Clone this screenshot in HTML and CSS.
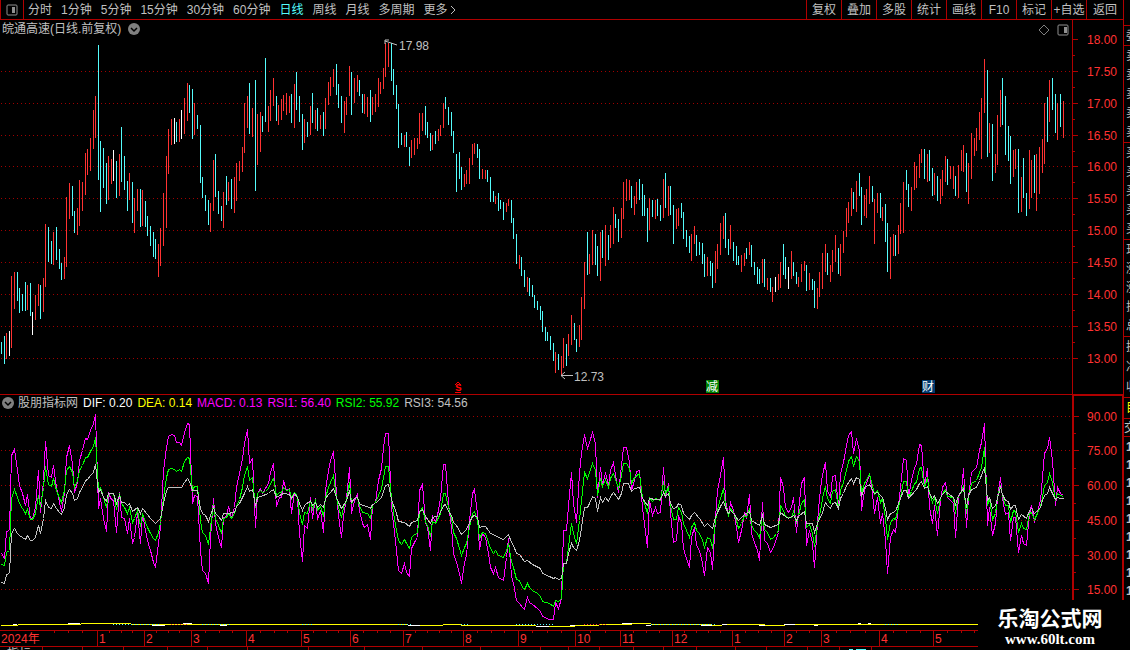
FILE: index.html
```html
<!DOCTYPE html>
<html lang="zh-CN">
<head>
  <meta charset="utf-8">
  <title>皖通高速 日线</title>
  <link rel="stylesheet" href="styles.css">
</head>
<body>
  <div class="app">
    <header class="toolbar">
      <button class="layout-btn" aria-label="布局">
        <svg width="12" height="12" viewBox="0 0 12 12"><rect x="1" y="1" width="10" height="10" rx="1" fill="none" stroke="#909090"/><rect x="6" y="3" width="3" height="6" fill="#909090"/></svg>
      </button>
      <nav class="periods">
        <button>分时</button>
        <button>1分钟</button>
        <button>5分钟</button>
        <button>15分钟</button>
        <button>30分钟</button>
        <button>60分钟</button>
        <button class="active">日线</button>
        <button>周线</button>
        <button>月线</button>
        <button>多周期</button>
        <button>更多<svg width="10" height="10" viewBox="0 0 10 10"><path d="M3 1 L7 5 L3 9" fill="none" stroke="#c0c0c0"/></svg></button>
      </nav>
      <div class="tools">
        <button>复权</button>
        <button>叠加</button>
        <button>多股</button>
        <button>统计</button>
        <button>画线</button>
        <button>F10</button>
        <button>标记</button>
        <button>+自选</button>
        <button>返回</button>
      </div>
    </header>

    <main class="main">
      <div class="charts">
        <section class="pane price-pane">
          <svg id="price-chart" class="chart"></svg>
          <div class="pane-title">
            <span>皖通高速(日线.前复权)</span>
            <svg width="12" height="12" viewBox="0 0 12 12"><circle cx="6" cy="6" r="6" fill="#808080"/><path d="M3 5 L6 8 L9 5" fill="none" stroke="#000" stroke-width="1.5"/></svg>
          </div>
          <div class="pane-icons">
            <svg width="12" height="12" viewBox="0 0 12 12"><path d="M6 1 L11 6 L6 11 L1 6 Z" fill="none" stroke="#808080"/></svg>
            <svg width="12" height="12" viewBox="0 0 12 12"><rect x="1" y="1" width="10" height="10" rx="1" fill="none" stroke="#909090"/><rect x="7" y="3" width="3" height="6" fill="#909090"/></svg>
          </div>
        </section>
        <svg id="price-axis" class="axis"></svg>

        <section class="pane">
          <svg id="rsi-chart" class="chart"></svg>
          <div class="legend">
            <svg width="12" height="12" viewBox="0 0 12 12"><circle cx="6" cy="6" r="6" fill="#808080"/><path d="M3 5 L6 8 L9 5" fill="none" stroke="#000" stroke-width="1.5"/></svg>
            <span>股朋指标网</span>
            <span class="dif">DIF: 0.20</span>
            <span class="dea">DEA: 0.14</span>
            <span class="rsi1">MACD: 0.13</span>
            <span class="rsi1">RSI1: 56.40</span>
            <span class="rsi2">RSI2: 55.92</span>
            <span class="rsi3">RSI3: 54.56</span>
          </div>
        </section>
        <svg id="rsi-axis" class="axis axis-active"></svg>
      </div>

      <aside class="quote">
        <div class="group ratio"><span>委</span></div>
        <div class="group"><span>卖</span><span>卖</span><span>卖</span><span>卖</span><span>卖</span></div>
        <div class="group"><span>买</span><span>买</span><span>买</span><span>买</span><span>买</span></div>
        <div class="group"><span>现</span><span>涨</span><span>涨</span><span>振</span><span>总</span></div>
        <div class="group last"><span>换</span><span>净</span><span>收</span></div>
        <div class="group tab"><span>目</span></div>
        <div class="group deals"><span>交</span></div>
        <div class="times"><b>1</b><b>1</b><b>1</b><b>1</b><b>1</b><b>1</b><b>1</b><b>1</b><b>1</b></div>
      </aside>
    </main>

    <svg id="time-axis" class="time-axis"></svg>
    <footer class="bottom-tabs">
      <span>指标</span>
      <svg id="tab-lines"></svg>
    </footer>

    <div class="watermark">
      <strong>乐淘公式网</strong>
      <a href="#">www.60lt.com</a>
    </div>
  </div>
  <script src="chart.js"></script>
</body>
</html>
```

FILE: styles.css
```css
* {
  box-sizing: border-box;
}

body {
  margin: 0;
  background: #000;
  color: #c0c0c0;
  font: 12px/14px "Liberation Sans", "Noto Sans CJK SC", sans-serif;
}

button {
  padding: 0;
  border: 0;
  background: none;
  color: inherit;
  font: inherit;
  white-space: nowrap;
  cursor: pointer;
}

svg {
  display: block;
}

.app {
  position: relative;
  display: flex;
  flex-direction: column;
  min-height: 100vh;
  overflow: hidden;
}

/* toolbar */
.toolbar {
  display: flex;
  height: 20px;
  margin-right: 6px;
  border: 1px solid #b00000;
  border-top: 0;
}

.layout-btn {
  display: flex;
  align-items: center;
  justify-content: center;
  width: 23px;
  border-right: 1px solid #b00000;
}

.periods {
  display: flex;
  flex: 1;
  gap: 9px;
  padding-left: 4px;
}

.periods button {
  display: flex;
  align-items: center;
}

.periods .active {
  color: #54fcfc;
}

.tools {
  display: flex;
}

.tools button {
  width: 35px;
  border-left: 1px solid #b00000;
}

.tools button:last-child {
  width: 37px;
}

/* charts */
.main {
  flex: 1;
  display: grid;
  grid-template-columns: 1fr 7px;
}

.charts {
  display: grid;
  grid-template-columns: 1fr 51px;
  grid-template-rows: 375fr 235fr;
}

.pane {
  position: relative;
  min-width: 0;
}

.price-pane {
  border-bottom: 1px solid #b00000;
}

.chart,
.axis {
  width: 100%;
  height: 100%;
}

.chart {
  position: absolute;
  inset: 0;
}

.axis {
  min-height: 0;
  border-left: 1px solid #b00000;
}

.axis-active {
  position: relative;
  z-index: 1;
  width: calc(100% + 1px);
  height: calc(100% + 1px);
  margin-top: -1px;
  border: 2px solid #b00000;
  border-bottom: 0;
}

svg text {
  font-size: 12px;
}

.pane-title {
  position: absolute;
  top: 2px;
  left: 2px;
  display: flex;
  align-items: center;
  gap: 7px;
}

.pane-icons {
  position: absolute;
  top: 4px;
  right: 3px;
  display: flex;
  gap: 7px;
}

.legend {
  position: absolute;
  top: 1px;
  left: 2px;
  display: flex;
  align-items: center;
  gap: 5px;
}

.legend svg {
  margin-right: -1px;
}

.dif { color: #fff; }
.dea { color: #ff0; }
.rsi1 { color: #f0f; }
.rsi2 { color: #0f0; }
.rsi3 { color: #c0c0c0; }

/* quote panel, only its left edge is on screen */
.quote {
  overflow: hidden;
  border-left: 1px solid #b00000;
  padding-top: 5px;
}

.group {
  display: flex;
  flex-direction: column;
  justify-content: space-around;
  height: 97px;
  padding-left: 2px;
  border-top: 1px solid #b00000;
}

.quote .ratio {
  height: 20px;
}

.quote .last {
  height: 61px;
}

.quote .tab {
  height: 21px;
  color: #ff0;
}

.quote .deals {
  height: 19px;
  padding-left: 0;
  border-bottom: 1px solid #b00000;
}

.times {
  display: flex;
  flex-direction: column;
  padding: 1px 0 0 2px;
  line-height: 18px;
}

/* time axis and bottom tabs */
.time-axis {
  width: 100%;
  height: 17px;
  border-top: 1px solid #b00000;
  border-bottom: 1px solid #b00000;
}

.bottom-tabs {
  position: relative;
  height: 3px;
  padding-left: 7px;
  overflow: hidden;
}

.bottom-tabs svg {
  position: absolute;
  inset: 0;
  width: 100%;
  height: 100%;
}

.watermark {
  position: absolute;
  right: 0;
  bottom: 0;
  z-index: 2;
  width: 152px;
  height: 50px;
  padding: 8px 8px 0 0;
  background: #000;
  color: #fff;
  text-align: center;
}

.watermark strong {
  display: block;
  font-size: 21px;
  line-height: 22px;
}

.watermark a {
  display: block;
  color: #fff;
  font: bold 15px/18px "Liberation Serif", serif;
  text-decoration: none;
}
```

FILE: chart.js
```javascript
// Coordinates are for a 1072 wide plot, 374 (price) and 235 (indicator) high.
const BASE_W = 1072;
const PRICE_H = 374;
const RSI_H = 235;

const COLORS = { r: "#ff3232", c: "#54fcfc", w: "#ffffff" };
const LINE = "#b00000";
const GRID = "#a00000";

// x high low colour
const BARS = `1 322 334 c,4 316 344 c,6 313 339 r,9 311 336 w,11 256 328 r,14 252 289 r,17 252 281 c,19 268 293 c,22 274 291 c,25 262 291 c,
27 265 290 r,30 263 296 c,32 292 315 w,35 275 300 r,38 264 286 r,40 265 299 c,43 258 292 r,45 204 267 r,48 207 242 c,51 221 244 c,
53 212 245 r,56 207 240 c,59 229 249 c,61 243 260 c,64 237 259 r,66 177 247 r,69 163 199 r,72 166 196 c,74 191 213 c,77 188 215 r,
79 160 206 r,82 162 191 r,85 133 175 r,87 129 155 r,90 118 151 r,93 90 129 r,95 76 118 r,98 25 160 c,100 121 192 c,103 128 168 c,
106 143 184 c,108 136 180 r,111 139 164 r,113 130 161 w,116 141 178 c,119 134 176 r,121 107 162 c,124 136 170 c,127 161 191 c,129 153 180 r,
132 162 203 c,134 178 213 r,137 169 191 r,140 169 207 c,142 170 206 r,145 181 207 c,147 196 216 c,150 206 226 c,153 212 237 c,155 219 239 c,
158 224 257 r,160 208 246 r,163 173 226 r,166 136 208 r,168 109 154 r,171 99 125 r,174 98 124 w,176 102 122 c,179 99 122 r,181 90 119 w,
184 78 114 r,187 63 101 r,189 65 93 c,192 69 119 c,194 83 115 r,197 95 109 c,200 105 163 c,202 157 178 c,205 175 191 c,208 180 205 c,
210 183 212 r,213 140 191 r,215 134 177 c,218 171 194 c,221 186 201 c,223 172 208 r,226 156 185 c,228 162 181 r,231 159 189 c,234 157 193 r,
236 143 181 r,239 141 161 r,242 127 152 r,244 83 133 r,247 76 108 r,249 63 114 c,252 88 117 r,255 60 171 c,257 94 145 r,260 92 132 r,
262 96 112 c,265 38 102 c,268 86 112 r,270 70 101 r,273 58 86 r,276 76 101 c,278 85 105 r,281 79 100 r,283 75 91 r,286 73 95 r,
289 76 93 r,291 74 103 c,294 64 108 r,296 52 90 c,299 76 102 c,302 94 130 c,304 99 123 r,307 102 117 c,310 86 115 r,312 73 103 c,
315 90 109 r,317 88 111 c,320 95 109 r,323 92 116 c,325 78 109 r,328 62 85 r,330 57 76 r,333 49 67 r,336 44 75 c,338 64 88 c,
341 76 103 c,344 81 113 r,346 77 95 r,349 46 76 r,351 52 95 c,354 58 83 r,357 55 72 r,359 60 76 c,362 74 93 c,364 74 94 r,
367 77 97 r,370 70 102 c,372 77 95 r,375 74 92 r,378 58 87 r,380 62 74 r,383 48 69 r,385 23 57 r,388 23 47 r,391 23 61 c,
393 49 75 c,396 65 89 c,398 84 128 c,401 113 125 c,404 115 127 r,406 112 127 c,409 127 146 c,411 120 138 r,414 118 135 r,417 118 129 r,
419 93 124 r,422 93 111 r,425 86 115 c,427 102 118 c,430 113 131 c,432 115 130 r,435 111 124 c,438 109 121 r,440 105 116 r,443 83 108 r,
445 77 89 c,448 87 105 c,451 92 116 c,453 111 133 c,456 134 172 c,459 132 159 c,461 147 170 c,464 154 167 r,466 150 164 r,469 138 164 r,
472 124 145 r,474 123 134 r,477 124 138 c,479 129 159 c,482 149 159 r,485 150 159 r,487 150 162 c,490 157 182 c,493 171 182 c,495 176 184 r,
498 173 191 c,500 180 189 c,503 182 200 c,506 183 192 r,508 179 186 r,511 180 203 c,513 198 219 c,516 214 244 c,519 235 249 r,521 237 256 c,
524 250 267 c,527 257 272 r,529 258 276 c,532 265 277 c,534 275 288 c,537 281 290 c,540 286 300 c,542 291 312 c,545 307 321 c,547 312 321 c,
550 316 330 c,553 323 341 c,555 332 353 r,558 334 350 c,561 336 355 r,563 318 348 r,566 324 346 c,568 314 336 r,571 295 325 r,574 303 320 c,
576 319 332 c,579 305 327 r,581 277 320 r,584 242 289 r,587 212 255 c,589 234 254 r,592 210 245 r,595 214 245 c,597 226 256 c,600 212 261 r,
602 210 238 c,605 205 246 r,608 215 240 c,610 205 228 r,613 187 224 r,615 194 208 c,618 199 222 c,621 188 218 r,623 162 199 r,626 159 181 r,
629 160 180 r,631 166 188 c,634 176 195 r,636 162 184 r,639 159 180 c,642 164 196 c,644 175 196 c,647 188 222 c,649 178 210 r,652 180 197 c,
655 180 199 r,657 179 196 c,660 185 201 c,663 159 198 r,665 153 188 c,668 166 196 r,670 166 195 c,673 185 224 c,676 189 209 r,678 188 206 r,
681 183 198 c,683 192 219 c,686 210 227 c,689 216 233 c,691 214 241 r,694 206 224 r,696 215 236 c,699 222 235 c,702 223 244 c,704 234 257 c,
707 237 256 r,710 241 256 c,712 243 268 c,715 231 263 r,717 224 249 r,720 203 235 r,723 196 219 r,725 193 228 c,728 219 235 c,730 205 229 r,
733 222 241 c,736 226 245 c,738 236 245 c,741 235 252 r,744 233 246 r,746 228 239 c,749 222 235 r,751 225 247 c,754 242 255 c,757 247 264 c,
759 249 264 c,762 239 263 r,764 239 267 c,767 258 270 r,770 258 272 c,772 267 282 r,775 257 272 w,778 254 270 r,780 242 268 r,783 224 255 c,
785 237 259 c,788 247 269 w,791 231 259 r,793 242 256 c,796 252 264 c,798 257 267 r,801 244 262 r,804 241 251 r,806 245 271 c,809 253 270 r,
812 259 270 c,814 261 288 c,817 268 289 r,819 252 277 r,822 233 269 r,825 224 252 r,827 233 255 c,830 245 262 r,832 230 252 r,835 215 242 r,
838 228 254 c,840 224 256 r,843 211 233 r,846 188 217 r,848 182 203 r,851 168 196 r,853 172 189 c,856 161 192 r,859 153 176 c,861 167 205 c,
864 175 196 r,866 169 198 r,869 156 184 r,872 166 182 c,874 179 224 r,877 173 193 r,880 173 198 c,882 187 201 r,885 184 222 c,887 203 252 c,
890 217 259 r,893 214 236 r,895 215 236 c,898 205 234 r,900 183 214 r,903 162 213 r,906 150 170 c,908 164 187 c,911 167 191 r,914 142 170 r,
916 146 168 r,919 134 158 r,921 129 143 r,924 129 159 c,927 134 162 r,929 130 161 c,932 148 176 c,934 153 175 r,937 156 181 c,940 159 184 r,
942 150 176 r,945 136 162 r,947 139 165 c,950 146 159 r,953 146 169 r,955 156 176 c,958 145 178 r,961 130 151 r,963 125 152 r,966 133 172 c,
968 143 184 r,971 113 159 r,974 118 136 r,976 108 131 r,979 92 120 r,981 78 139 r,984 39 93 r,987 50 137 c,989 103 133 r,992 104 161 c,
995 134 153 r,997 95 145 r,1000 70 107 r,1002 58 105 c,1005 76 135 c,1008 106 141 c,1010 116 164 c,1013 130 157 r,1015 129 149 r,1018 129 193 c,
1021 157 192 r,1023 138 178 c,1026 173 196 c,1029 130 189 r,1031 140 178 r,1034 135 173 c,1036 134 191 r,1039 127 174 r,1042 119 153 r,1044 83 144 r,
1047 77 122 c,1049 60 102 r,1052 58 90 c,1055 74 113 c,1057 83 120 r,1060 74 107 c,1063 81 118 r`;

const RSI1 = `1,158 4,163 6,136 9,135 11,60 14,54 17,75 19,90 22,98 25,110 27,99 30,124 32,123 35,112 38,75 40,117 43,85 45,46 48,80 51,82
53,70 56,92 59,107 61,116 64,97 66,62 69,50 72,68 74,97 77,87 79,65 82,55 85,43 87,44 90,35 93,28 95,19 98,113 100,103 103,123
106,136 108,98 111,104 113,105 116,137 119,97 121,122 124,123 127,138 129,123 132,148 134,142 137,117 140,148 142,118 145,135 147,145 150,155 153,167 155,172
158,148 160,132 163,75 166,52 168,41 171,39 174,40 176,47 179,47 181,50 184,37 187,28 189,29 192,108 194,100 197,101 200,155 202,175 205,178 208,188
210,142 213,103 215,128 218,142 221,152 223,122 226,121 228,111 231,122 234,112 236,92 239,78 242,63 244,48 247,34 249,68 252,63 255,132 257,98 260,93
262,98 265,93 268,88 270,77 273,68 276,111 279,102 281,102 283,85 286,95 289,93 291,118 294,97 297,102 299,138 302,166 304,130 307,133 310,102 312,123
315,103 317,124 320,115 323,137 325,95 328,75 330,65 333,56 336,98 338,120 341,142 343,120 346,103 349,72 351,118 354,105 357,99 359,115 362,128 364,132
367,129 370,144 372,110 375,107 378,85 381,73 383,52 385,38 388,38 391,112 393,128 396,155 398,175 401,178 404,168 406,177 409,181 411,153 414,147 417,142
419,95 422,89 425,127 427,132 430,155 432,120 435,127 438,115 440,103 443,69 445,69 448,108 451,132 453,158 456,167 459,178 461,188 464,167 466,160 469,125
472,98 474,94 477,118 479,154 482,138 485,142 488,158 490,172 493,178 495,172 498,182 503,185 506,162 508,143 511,180 513,188 516,205 519,208 522,212 524,214
527,202 529,207 532,209 537,213 540,216 542,221 549,224 553,224 555,207 558,213 561,203 563,135 566,135 568,110 571,77 573,108 576,127 579,78 581,58 584,39
587,53 589,47 592,37 595,48 597,102 600,72 602,90 605,77 608,90 610,75 613,67 616,85 618,97 621,70 623,52 626,52 629,67 631,95 634,85 636,76
639,75 642,113 644,128 647,152 649,105 652,120 655,112 657,118 660,117 663,72 665,102 668,88 670,118 673,147 676,145 678,120 681,128 683,153 686,163 689,172
691,142 694,132 696,150 699,155 702,168 704,180 707,152 710,157 712,174 715,123 717,95 720,80 723,62 725,105 728,120 730,107 733,115 736,132 738,147 741,135
744,118 746,122 749,99 751,138 754,147 757,155 759,165 762,107 764,145 767,148 770,157 773,152 776,143 778,137 780,82 783,92 785,112 788,117 791,112 793,102
796,137 798,115 801,88 804,82 806,150 809,135 812,148 814,172 817,127 819,103 821,85 823,75 825,67 827,95 830,102 832,81 835,80 838,113 840,78 843,67
846,50 848,40 851,36 853,58 856,43 859,55 861,115 864,95 869,78 872,98 874,118 877,102 880,128 882,118 885,145 887,178 890,142 893,134 895,137 898,110
900,92 903,63 906,65 908,102 911,85 914,72 916,69 919,49 921,50 924,90 927,73 929,112 932,128 934,110 937,140 940,105 942,92 945,87 947,102 950,105
953,108 955,142 958,102 961,95 963,73 966,132 968,102 971,77 976,72 979,55 981,47 984,28 987,130 989,112 992,140 995,128 997,102 1000,82 1002,103 1005,119
1008,117 1010,145 1013,122 1015,122 1018,157 1021,140 1023,148 1026,150 1029,118 1031,110 1034,126 1037,117 1040,105 1042,82 1044,58 1047,53 1049,42 1052,65 1055,110 1057,92
1060,98 1063,100`;

const RSI2 = `1,169 4,170 6,157 9,155 11,103 14,94 17,102 19,108 22,113 25,118 27,114 30,124 32,124 35,118 38,100 40,112 43,92 45,71 48,89 51,91
53,83 56,95 59,103 61,107 64,95 66,75 69,71 72,77 74,92 77,85 79,75 82,70 85,62 87,62 90,56 93,51 95,42 98,95 100,92 103,102
106,112 108,98 113,98 116,114 119,98 121,108 124,112 127,118 129,112 132,127 134,123 137,115 140,131 142,118 145,127 147,132 150,138 153,143 155,145
158,137 160,127 163,102 166,82 168,74 171,73 174,74 176,76 179,74 181,76 184,66 187,62 189,63 192,95 194,91 197,91 200,125 202,137 205,140 208,149
210,132 213,109 215,123 218,130 221,138 223,123 226,122 228,118 231,123 234,118 236,111 239,104 242,92 244,80 247,71 249,85 252,82 255,112 257,98 260,95
262,97 265,96 268,93 270,88 273,83 276,100 279,97 281,97 283,92 286,95 289,94 291,103 294,97 297,101 299,118 302,129 304,117 307,118 310,105 312,114
315,105 317,115 320,111 323,121 325,102 328,92 330,87 333,80 336,102 338,112 341,122 343,112 346,105 349,87 351,108 354,103 357,102 359,110 362,117
367,118 370,123 372,110 375,107 378,100 381,93 383,82 385,71 388,71 391,103 393,117 396,135 398,145 401,149 404,144 406,148 409,153 411,142 414,139 417,138
419,117 422,112 425,127 427,130 430,141 432,126 435,128 438,122 440,118 443,98 445,98 448,112 451,123 453,137 456,143 459,153 461,160 464,152 466,148 469,132
472,118 474,116 477,125 479,143 482,137 485,138 488,147 490,153 493,158 495,155 498,160 503,162 506,155 508,148 511,166 513,172 516,184 519,185 522,192 524,194
527,188 529,192 532,195 537,198 540,201 542,206 549,208 553,211 555,205 558,206 561,203 563,168 566,168 568,152 571,128 573,138 576,148 579,125 581,105 584,77
587,83 589,77 592,68 595,75 597,100 600,83 602,91 605,84 608,92 610,83 613,78 616,87 618,93 621,80 623,68 626,68 629,73 631,88 634,82
639,78 642,102 644,108 647,118 649,102 652,106 655,103 660,105 663,86 665,98 668,92 670,110 673,124 676,124 678,112 681,117 683,128 686,135 689,142
691,132 694,127 696,135 699,138 702,145 704,152 707,142 710,144 712,153 715,125 717,115 720,103 723,93 725,110 728,120 730,113 733,117 736,125 738,133 741,128
744,120 746,122 749,113 751,130 754,135 757,138 759,143 762,118 764,134 767,137 770,144 773,142 776,138 778,135 780,110 783,115 785,121 788,122 791,122 793,116
796,127 798,120 801,108 804,104 806,132 809,129 812,138 814,151 817,128 819,120 821,110 823,98 825,91 827,103 830,108 832,96 835,94 838,113 840,95 843,87
846,75 848,66 851,61 853,71 856,61 859,66 861,98 864,88 869,79 872,90 874,99 877,95 880,107 882,103 885,123 887,144 890,127 893,123 895,124 898,112
900,102 903,86 906,86 908,102 911,96 914,88 916,87 919,73 921,72 924,92 927,82 929,98 932,107 934,102 937,118 940,103 942,98 945,94 947,101
953,102 955,118 958,100 961,97 963,90 966,118 968,102 971,88 976,85 979,77 981,72 984,52 987,110 989,103 992,124 995,118 997,102 1000,90 1002,100 1005,110
1008,110 1010,127 1013,115 1015,116 1018,137 1021,128 1023,133 1026,134 1029,118 1031,117 1034,124 1037,118 1040,111 1042,102 1044,90 1047,87 1049,78 1052,87 1055,105 1057,98
1060,100 1063,101`;

const RSI3 = `1,187 4,188 6,179 9,178 11,138 14,133 17,138 19,140 22,142 25,144 27,140 30,145 32,145 35,142 38,130 40,138 43,123 45,105 48,112 51,113
53,108 56,113 59,117 61,119 64,112 66,99 69,94 72,98 74,105 77,103 79,97 82,92 85,85 87,84 90,80 93,77 95,69 98,97 100,94 103,102
106,106 108,98 113,98 116,108 119,100 121,107 124,107 127,110 129,108 132,116 137,112 140,118 142,113 147,119 150,123 155,128 160,123 163,108 166,95 168,92
181,92 184,87 187,83 189,86 192,95 197,95 200,113 202,118 205,120 208,126 210,120 213,112 215,118 218,121 221,125 223,118 226,118 234,117 236,111 239,108
242,102 244,98 247,91 249,96 252,94 255,110 257,102 260,101 268,98 270,96 273,94 276,102 279,100 283,98 289,99 291,103 294,98 297,102 299,108 302,115
304,110 310,105 312,110 315,107 317,112 320,109 323,112 325,103 328,99 330,97 333,93 336,102 338,107 341,113 346,105 349,95 351,107 354,103 357,102 359,108
362,110 367,111 370,113 372,109 375,108 381,102 383,96 385,90 388,89 391,104 396,118 398,126 404,127 409,131 411,127 417,125 419,116 422,114 425,121 430,128
432,122 438,120 440,117 443,110 445,109 448,116 451,120 453,127 456,130 461,139 466,134 469,127 472,121 474,120 477,122 479,132 482,131 485,131 488,135 490,138
495,140 498,142 503,144 508,139 511,147 513,150 516,158 519,159 524,166 527,165 532,169 540,173 542,178 549,181 553,183 555,182 558,184 561,183 563,168 566,168
568,158 571,148 573,152 576,155 579,145 581,132 584,112 587,112 589,108 592,101 595,103 597,116 600,102 602,107 605,102 608,106 610,101 613,97 616,101 618,104
621,98 623,88 628,88 631,96 634,93 639,92 642,103 647,110 649,103 655,104 660,104 663,97 665,101 668,98 670,108 673,113 676,112 678,108 681,110 683,118
689,124 691,120 694,117 699,123 704,131 707,128 712,133 715,122 717,117 720,111 723,106 725,112 728,118 730,115 733,118 738,125 744,119 749,116 751,125 759,130
762,120 764,129 770,132 778,129 780,117 785,121 788,123 793,120 796,125 798,121 804,116 806,128 812,128 814,137 817,128 819,123 821,120 825,107 827,110 830,113
832,108 835,107 838,113 840,103 843,98 846,90 851,83 853,88 856,82 859,84 861,101 864,92 869,89 874,98 877,97 882,102 885,113 887,124 890,118 895,116
900,103 903,95 906,95 908,103 916,94 919,88 921,86 924,93 927,91 929,98 932,103 934,100 937,108 942,99 945,96 953,102 955,109 958,100 963,93 966,112
968,100 971,94 976,92 979,85 984,72 987,105 989,102 992,113 995,110 1000,92 1002,99 1005,105 1008,106 1010,114 1013,110 1015,110 1018,124 1021,119 1026,123 1029,115
1031,113 1034,118 1040,112 1042,105 1044,100 1047,98 1049,92 1052,98 1055,104 1057,102 1060,103 1063,103`;

// macd lines, flat on this scale: start, end, y
const DEA = [[1, 17, 230], [18, 80, 229], [81, 130, 228], [131, 407, 229], [408, 442, 230], [443, 460, 229],
  [461, 535, 230], [536, 574, 231], [575, 598, 230], [599, 631, 229], [632, 650, 228], [651, 711, 229],
  [712, 721, 230], [722, 764, 229], [765, 784, 230], [785, 1072, 229]];
const DIF = [[13, 17, 229], [68, 80, 228], [152, 165, 230], [183, 192, 228], [220, 227, 230], [408, 420, 230],
  [536, 549, 231], [570, 575, 230], [622, 632, 228], [646, 651, 230], [701, 712, 230], [722, 727, 229],
  [759, 765, 230], [784, 795, 229], [814, 818, 230], [858, 861, 228], [868, 871, 228]];
const MACD = [[113, 160, "c"], [171, 188, "r"], [202, 230, "c"], [302, 314, "c"], [398, 412, "c"], [461, 468, "c"],
  [516, 554, "c"], [584, 606, "r"], [651, 715, "c"], [885, 900, "c"]];

const PRICE_TICKS = [["18.00", 19], ["17.50", 51], ["17.00", 83], ["16.50", 115], ["16.00", 146], ["15.50", 178],
  ["15.00", 210], ["14.50", 242], ["14.00", 274], ["13.50", 306], ["13.00", 338]];
const RSI_TICKS = [["90.00", 21], ["75.00", 55], ["60.00", 90], ["45.00", 125], ["30.00", 160], ["15.00", 194]];

const MONTHS = [["1", 97], ["2", 144], ["3", 191], ["4", 246], ["5", 301], ["6", 350], ["7", 403], ["8", 463], ["9", 518],
  ["10", 575], ["11", 620], ["12", 672], ["1", 732], ["2", 784], ["3", 821], ["4", 879], ["5", 933], ["6", 988]];
const TAB_LINES = [42, 82, 123, 167, 207, 247, 308, 364, 422, 480, 540, 568, 599, 633, 663, 696, 735, 766, 807, 839, 871];

const $ = (id) => document.getElementById(id);

function rect(x, y, w, h, fill) {
  return `<rect x="${Math.round(x)}" y="${Math.round(y)}" width="${w}" height="${h}" fill="${fill}"/>`;
}

function label(x, y, text, fill, extra = "") {
  return `<text x="${Math.round(x)}" y="${Math.round(y)}" fill="${fill}" ${extra}>${text}</text>`;
}

function gridLine(y, width) {
  return `<path d="M1 ${Math.round(y) + 0.5} H${width}" stroke="${GRID}" stroke-dasharray="1 3" shape-rendering="crispEdges"/>`;
}

function drawPrice(svg) {
  const w = svg.clientWidth;
  const sx = w / BASE_W;
  const sy = svg.clientHeight / PRICE_H;
  let out = "";

  PRICE_TICKS.slice(1).forEach(([, y]) => (out += gridLine(y * sy, w)));

  BARS.split(",").forEach((bar) => {
    const [x, hi, lo, color] = bar.trim().split(" ");
    out += rect(x * sx, hi * sy, 1, Math.round((lo - hi) * sy), COLORS[color]);
  });

  // high and low marks
  const hx = Math.round(385 * sx);
  const hy = Math.round(20 * sy);
  out += `<path d="M${hx + 4} ${hy} H${hx} V${hy + 4} M${hx} ${hy + 1} L${hx + 12} ${hy + 5}" fill="none" stroke="#c0c0c0"/>`;
  out += label(399 * sx, 30 * sy, "17.98", "#c0c0c0");
  const lx = Math.round(561 * sx);
  const ly = Math.round(355 * sy);
  out += `<path d="M${lx} ${ly + 0.5} H${lx + 12} M${lx + 4} ${ly - 3} L${lx} ${ly + 0.5} L${lx + 4} ${ly + 4}" fill="none" stroke="#c0c0c0"/>`;
  out += label(574 * sx, 361 * sy, "12.73", "#c0c0c0");

  // event flags
  out += label(455 * sx, 371 * sy, "s", "#ff0000", 'font-weight="bold"');
  out += `<path d="M${455 * sx} ${365 * sy} l3 -3 l3 3 M${455 * sx} ${372.5 * sy} h6" fill="none" stroke="#ff0000"/>`;
  out += rect(706 * sx, 360 * sy, 13, 13, "#008000") + label(706 * sx, 371 * sy, "减", "#fff");
  out += rect(922 * sx, 360 * sy, 13, 13, "#003a70") + label(922 * sx, 371 * sy, "财", "#fff");
  svg.innerHTML = out;
}

function polyline(points, color, sx, sy) {
  const pts = points.trim().split(/\s+/).map((p) => {
    const [x, y] = p.split(",");
    return `${x * sx + 0.5},${y * sy + 0.5}`;
  });
  return `<polyline points="${pts.join(" ")}" fill="none" stroke="${color}" shape-rendering="crispEdges"/>`;
}

function drawRsi(svg) {
  const w = svg.clientWidth;
  const sx = w / BASE_W;
  const sy = svg.clientHeight / RSI_H;
  let out = "";

  RSI_TICKS.forEach(([, y]) => (out += gridLine(y * sy, w)));
  out += polyline(RSI1, "#ff00ff", sx, sy);
  out += polyline(RSI2, "#00ff00", sx, sy);
  out += polyline(RSI3, "#c0c0c0", sx, sy);

  DEA.forEach(([a, b, y]) => (out += rect(a * sx, y * sy, Math.ceil((b - a + 1) * sx), 1, "#ffff00")));
  DIF.forEach(([a, b, y]) => (out += rect(a * sx, y * sy, Math.ceil((b - a) * sx), 1, "#ffffff")));
  MACD.forEach(([a, b, color]) => {
    for (let x = a; x < b; x += 3) {
      out += rect(x * sx, 229 * sy, 1, 1, COLORS[color]);
    }
  });
  svg.innerHTML = out;
}

// the axis svg can be a pixel taller or shorter than its plot
function drawAxis(svg, ticks, sy, offset, labelX) {
  let out = "";
  ticks.forEach(([text, y], i) => {
    out += rect(0, y * sy + offset, 5, 1, LINE);
    out += label(labelX, y * sy + offset + 5, text, COLORS.r);
    if (ticks[i + 1]) {
      out += rect(0, ((y + ticks[i + 1][1]) / 2) * sy + offset, 2, 1, LINE);
    }
  });
  svg.innerHTML = out;
}

function drawTime(svg) {
  const sx = (svg.clientWidth - 58) / BASE_W;
  let out = label(1, 12, "2024年", COLORS.r);
  out += rect(54 * sx, 0, 1, 2, LINE) + rect(68 * sx, 0, 1, 2, LINE) + rect(82 * sx, 0, 1, 2, LINE);
  MONTHS.forEach(([text, x], i) => {
    out += rect(x * sx, 0, 1, 15, LINE);
    out += label(x * sx + 2, 12, text, COLORS.r);
    const next = MONTHS[i + 1];
    if (next) {
      const n = Math.round((next[1] - x) / 13);
      for (let k = 1; k < n; k++) {
        out += rect((x + ((next[1] - x) * k) / n) * sx, 0, 1, 2, LINE);
      }
    }
  });
  svg.innerHTML = out;
}

function drawTabs(svg) {
  const sx = (svg.clientWidth - 58) / BASE_W;
  let out = TAB_LINES.map((x) => rect(x * sx, 0, 1, 3, LINE)).join("");
  out += rect(849 * sx, 2, 4, 1, COLORS.c) + rect(856 * sx, 2, 10, 1, COLORS.c);
  svg.innerHTML = out;
}

function draw() {
  const price = $("price-chart");
  const rsi = $("rsi-chart");
  drawPrice(price);
  drawRsi(rsi);
  drawAxis($("price-axis"), PRICE_TICKS, price.clientHeight / PRICE_H, 0, 14);
  drawAxis($("rsi-axis"), RSI_TICKS, rsi.clientHeight / RSI_H, -1, 13);
  drawTime($("time-axis"));
  drawTabs($("tab-lines"));
}

draw();
window.addEventListener("resize", draw);
```
